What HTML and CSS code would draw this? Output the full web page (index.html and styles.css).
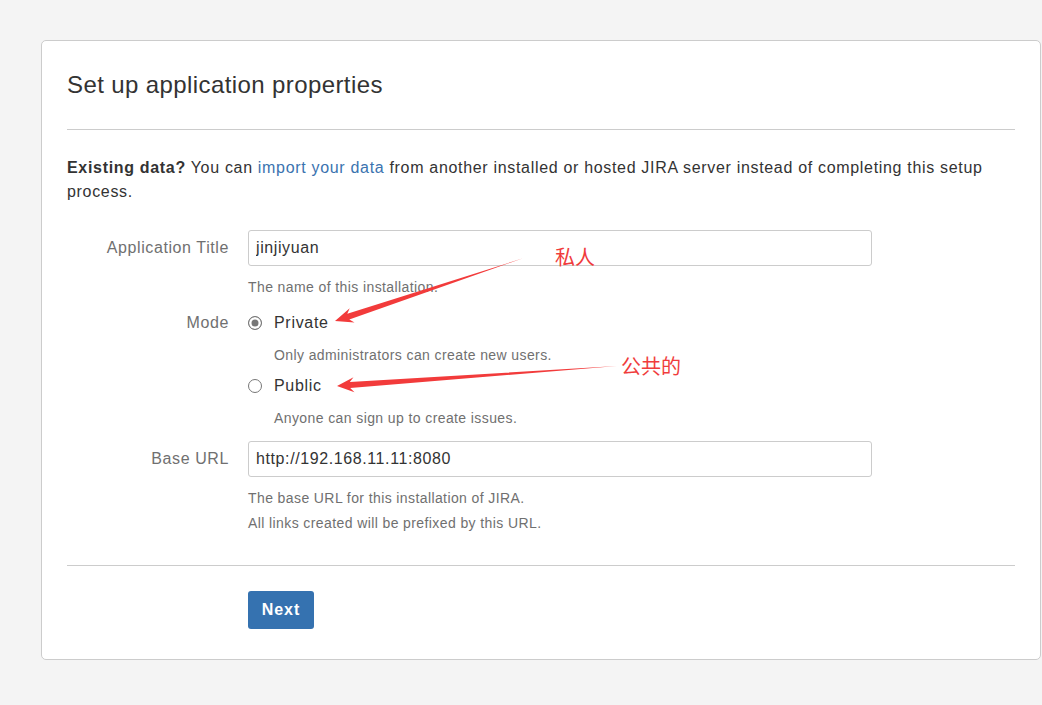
FILE: index.html
```html
<!DOCTYPE html>
<html lang="en">
<head>
<meta charset="utf-8">
<title>Set up application properties</title>
<link rel="stylesheet" href="styles.css">
</head>
<body>
<div class="page">
  <div class="card">
    <h1 class="title">Set up application properties</h1>
    <hr class="rule">
    <p class="intro"><strong>Existing data?</strong> You can <a class="link" href="#">import your data</a> from another installed or hosted JIRA server instead of completing this setup process.</p>
    <form class="form">
      <div class="row">
        <label class="label" for="title">Application Title</label>
        <div class="field">
          <input class="text" id="title" type="text" value="jinjiyuan">
          <div class="desc">The name of this installation.</div>
        </div>
      </div>
      <div class="row row-mode">
        <div class="label label-line">Mode</div>
        <div class="field">
          <label class="option"><input class="radio" type="radio" name="mode" checked><span>Private</span></label>
          <div class="desc desc-opt">Only administrators can create new users.</div>
          <label class="option option-next"><input class="radio" type="radio" name="mode"><span>Public</span></label>
          <div class="desc desc-opt">Anyone can sign up to create issues.</div>
        </div>
      </div>
      <div class="row">
        <label class="label" for="url">Base URL</label>
        <div class="field">
          <input class="text" id="url" type="text" value="http://192.168.11.11:8080">
          <div class="desc">The base URL for this installation of JIRA.</div>
          <div class="desc desc-more">All links created will be prefixed by this URL.</div>
        </div>
      </div>
      <hr class="rule rule-bottom">
      <div class="actions">
        <button class="btn" type="button">Next</button>
      </div>
    </form>
  </div>
</div>

<svg class="annot" width="1042" height="705" viewBox="0 0 1042 705" aria-hidden="true">
  <polygon class="arrow" points="523,258.3 347.3,313.7 349.7,308.2 335,321 354.5,322.4 349.3,319.4"/>
  <polygon class="arrow" points="617,366 349.8,382.1 353.5,377.3 337,386 354.5,392.3 350.2,388.1"/>
</svg>
<div class="note note-private">私人</div>
<div class="note note-public">公共的</div>
</body>
</html>
```
FILE: styles.css
```css
html, body {
  margin: 0;
  padding: 0;
}
body {
  background: #f4f4f4;
  font-family: "Liberation Sans", Arial, sans-serif;
  color: #333;
  letter-spacing: 0.4px;
  position: relative;
  min-height: 705px;
}
.page {
  padding: 40px 0 0 41px;
}
.card {
  box-sizing: border-box;
  width: 1000px;
  background: #fff;
  border: 1px solid #ccc;
  border-radius: 5px;
  padding: 29px 25px 30px 25px;
}
.title {
  margin: 0 0 29px;
  font-size: 24px;
  line-height: 30px;
  font-weight: normal;
  color: #333;
}
.rule {
  margin: 0;
  border: 0;
  border-top: 1px solid #ccc;
  height: 0;
}
.intro {
  margin: 26px 0 0;
  font-size: 16px;
  line-height: 24px;
  letter-spacing: 0.68px;
}
.intro strong {
  font-weight: bold;
}
.link {
  color: #3b73af;
  text-decoration: none;
}
.form {
  margin: 26px 0 0;
}
.row {
  display: grid;
  grid-template-columns: 162px 624px;
  column-gap: 19px;
}
.row + .row {
  margin-top: 13px;
}
.row-mode {
  margin-top: 14px !important;
}
.label {
  text-align: right;
  font-size: 16px;
  line-height: 24px;
  letter-spacing: 0.6px;
  color: #707070;
  padding-top: 6px;
}
.label-line {
  padding-top: 0;
}
.field {
  display: flex;
  flex-direction: column;
}
.text {
  box-sizing: border-box;
  width: 624px;
  height: 36px;
  margin: 0;
  padding: 0 7px;
  border: 1px solid #ccc;
  border-radius: 3px;
  font-family: "Liberation Sans", Arial, sans-serif;
  font-size: 16px;
  letter-spacing: 0.6px;
  color: #333;
  background: #fff;
  outline: none;
}
.desc {
  margin-top: 11px;
  font-size: 14px;
  line-height: 20px;
  color: #707070;
}
.desc-more {
  margin-top: 5px;
}
.desc-opt {
  margin-top: 10px;
  padding-left: 26px;
}
.option {
  display: flex;
  align-items: center;
  gap: 12px;
  font-size: 16px;
  line-height: 24px;
  letter-spacing: 0.7px;
  color: #333;
}
.option-next {
  margin-top: 9px;
}
.radio {
  appearance: none;
  -webkit-appearance: none;
  box-sizing: border-box;
  width: 14px;
  height: 14px;
  margin: 0;
  border: 1px solid #777;
  border-radius: 50%;
  background: #fff;
  flex: none;
}
.radio:checked {
  background: #777;
  box-shadow: inset 0 0 0 2.5px #fff;
}
.rule-bottom {
  margin-top: 32px;
}
.actions {
  margin-top: 25px;
  padding-left: 181px;
}
.btn {
  box-sizing: border-box;
  width: 66px;
  height: 38px;
  padding: 0;
  border: 0;
  border-radius: 3px;
  background: #3572b0;
  color: #fff;
  font-family: "Liberation Sans", Arial, sans-serif;
  font-size: 16px;
  font-weight: bold;
  letter-spacing: 0.9px;
  text-align: center;
}
.annot {
  position: absolute;
  top: 0;
  left: 0;
  pointer-events: none;
}
.arrow {
  fill: #f23b3b;
}
.note {
  position: absolute;
  font-family: "Noto Sans CJK SC", sans-serif;
  font-size: 20px;
  line-height: 20px;
  letter-spacing: 0;
  color: #f03c3c;
}
.note-private {
  left: 555px;
  top: 247px;
}
.note-public {
  left: 621px;
  top: 356px;
}
```
